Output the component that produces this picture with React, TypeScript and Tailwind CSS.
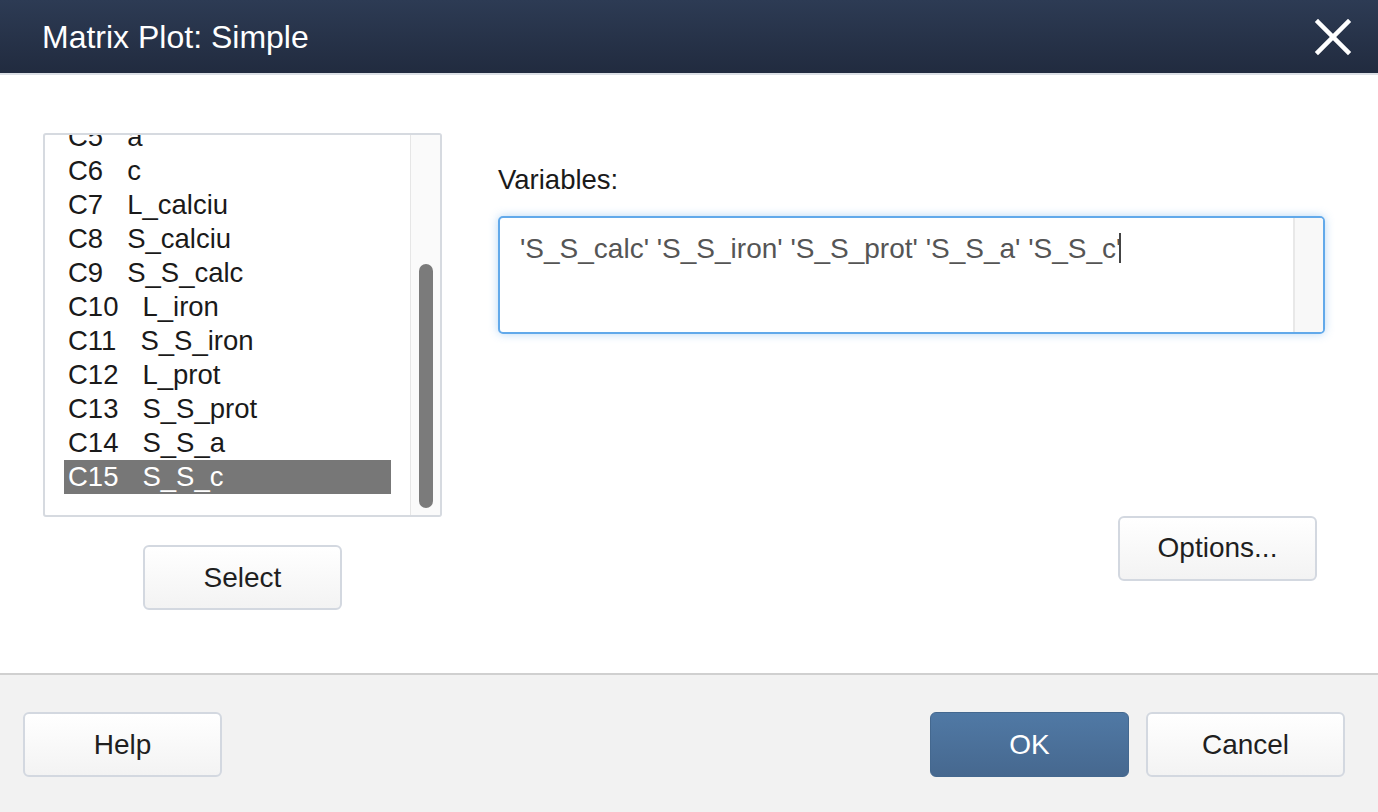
import React from 'react';

const COLUMNS = [
    { code: 'C5', name: 'a' },
    { code: 'C6', name: 'c' },
    { code: 'C7', name: 'L_calciu' },
    { code: 'C8', name: 'S_calciu' },
    { code: 'C9', name: 'S_S_calc' },
    { code: 'C10', name: 'L_iron' },
    { code: 'C11', name: 'S_S_iron' },
    { code: 'C12', name: 'L_prot' },
    { code: 'C13', name: 'S_S_prot' },
    { code: 'C14', name: 'S_S_a' },
    { code: 'C15', name: 'S_S_c' },
];

const SELECTED = 'C15';

const CloseIcon = () => (
    <svg width="38" height="38" viewBox="0 0 38 38" fill="none" stroke="white" strokeWidth="4.5" strokeLinecap="square">
        <path d="M4 4 L34 34" />
        <path d="M34 4 L4 34" />
    </svg>
);

const DialogButton = ({ label, primary = false }: { label: string; primary?: boolean }) => (
    <button
        className={
            primary
                ? 'w-[199px] h-[65px] rounded-[6px] border border-[#44688f] bg-gradient-to-b from-[#5079a5] to-[#46688f] text-white text-[28px]'
                : 'w-[199px] h-[65px] rounded-[6px] border-2 border-[#d3d8e0] bg-gradient-to-b from-white to-[#f3f3f3] text-[#1f1f1f] text-[28px]'
        }
    >
        {label}
    </button>
);

export default function App() {
    return (
        <div className="w-[1378px] h-[812px] flex flex-col bg-white font-['Liberation_Sans',Arial,sans-serif] overflow-hidden">
            {/* Title bar */}
            <header className="h-[75px] shrink-0 flex items-center justify-between pl-[42px] pr-[26px] bg-gradient-to-b from-[#2d3b54] to-[#212b3f] border-b-2 border-[#dbdfe5]">
                <h1 className="text-white text-[32px] leading-none">Matrix Plot: Simple</h1>
                <CloseIcon />
            </header>

            {/* Body */}
            <div className="flex-1 flex pt-[58px]">
                {/* Column list (scrolled down, first row partly hidden) */}
                <div className="flex flex-col items-center ml-[43px] w-[399px]">
                    <div className="w-[399px] h-[384px] border-2 border-[#d6dae0] rounded-[3px] flex overflow-hidden">
                        <div className="flex-1 overflow-hidden pl-[19px] pr-[19px]">
                            <div className="-mt-[15px]">
                                {COLUMNS.map(col => (
                                    <div
                                        key={col.code}
                                        className={`h-[34px] leading-[34px] pl-[4px] text-[27.5px] whitespace-nowrap ${col.code === SELECTED ? 'bg-[#777777] text-white' : 'text-[#1a1a1a]'}`}
                                    >
                                        <span className="inline-block mr-[24px]">{col.code}</span>
                                        <span>{col.name}</span>
                                    </div>
                                ))}
                            </div>
                        </div>
                        <div className="w-[30px] border-l border-[#e6e6e6] bg-[#fafafa] flex flex-col items-center pt-[129px] pb-[7px]">
                            <div className="w-[14px] flex-1 rounded-full bg-[#7b7b7b]" />
                        </div>
                    </div>
                    <div className="mt-[28px]">
                        <DialogButton label="Select" />
                    </div>
                </div>

                {/* Variables */}
                <div className="flex flex-col ml-[56px] w-[827px]">
                    <label className="text-[27.5px] text-[#1a1a1a] leading-none mt-[33px]">Variables:</label>
                    <div className="mt-[22px] h-[118px] rounded-[5px] border-2 border-[#62a9ea] shadow-[0_0_10px_rgba(98,169,234,0.45)] flex overflow-hidden bg-white">
                        <div className="flex-1 pl-[20px] pt-[14px] text-[28px] text-[#555555] leading-[34px] whitespace-nowrap">
                            'S_S_calc' 'S_S_iron' 'S_S_prot' 'S_S_a' 'S_S_c'<span className="inline-block w-[2px] h-[30px] bg-[#444444] align-middle -ml-[2px] -mt-[4px]" />
                        </div>
                        <div className="w-[30px] border-l-2 border-[#e8e8e8] bg-[#f8f8f8]" />
                    </div>
                    <div className="flex justify-end mt-[182px] mr-[8px]">
                        <DialogButton label="Options..." />
                    </div>
                </div>
            </div>

            {/* Footer */}
            <footer className="h-[139px] shrink-0 bg-[#f2f2f2] border-t-2 border-[#d0d0d0] flex items-center pl-[23px] pr-[33px] pt-[2px]">
                <DialogButton label="Help" />
                <div className="flex-1" />
                <div className="flex gap-[17px]">
                    <DialogButton label="OK" primary />
                    <DialogButton label="Cancel" />
                </div>
            </footer>
        </div>
    );
}
